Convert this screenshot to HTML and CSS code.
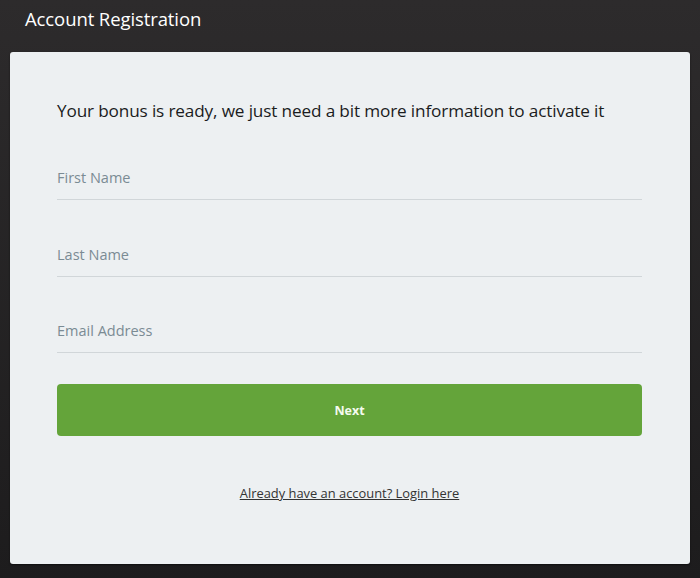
FILE: index.html
```html
<!DOCTYPE html>
<html lang="en">
<head>
<meta charset="utf-8">
<title>Account Registration</title>
<link rel="stylesheet" href="styles.css">
</head>
<body>
<div class="page">
  <header class="topbar">
    <h1 class="title">Account Registration</h1>
  </header>
  <main class="card">
    <p class="intro">Your bonus is ready, we just need a bit more information to activate it</p>
    <form class="form">
      <label class="field"><input class="input" type="text" placeholder="First Name"></label>
      <label class="field"><input class="input" type="text" placeholder="Last Name"></label>
      <label class="field"><input class="input" type="email" placeholder="Email Address"></label>
      <button class="next" type="button">Next</button>
    </form>
    <div class="login"><a href="#" class="login-link">Already have an account? Login here</a></div>
  </main>
</div>
</body>
</html>
```
FILE: styles.css
```css
* { box-sizing: border-box; }
html, body { margin: 0; padding: 0; }
body {
  width: 700px;
  height: 578px;
  overflow: hidden;
  font-family: "Open Sans", "Noto Sans", sans-serif;
  background: linear-gradient(#2d2b2c, #1d1c1d);
}
.page {
  padding: 0 10px;
  height: 578px;
  display: flex;
  flex-direction: column;
}
.topbar {
  height: 52px;
  padding: 6px 0 0 15px;
}
.title {
  margin: 0;
  font-size: 18.5px;
  font-weight: 400;
  color: #ffffff;
  line-height: 26px;
  letter-spacing: -0.1px;
}
.card {
  height: 512px;
  background: #edf0f2;
  border-radius: 3px;
  padding: 44px 48px 0 47px;
  box-shadow: 0 1px 2px rgba(0,0,0,0.5);
}
.intro {
  margin: 0;
  font-size: 17.2px;
  color: #1b1c1d;
  line-height: 30px;
  letter-spacing: -0.15px;
  white-space: nowrap;
}
.form {
  display: flex;
  flex-direction: column;
  margin-top: 38px;
}
.field {
  display: block;
  border-bottom: 1px solid #d1d6d9;
  height: 36px;
  padding-bottom: 9px;
  margin-bottom: 41px;
}
.field:nth-child(2) { margin-bottom: 40px; }
.field:nth-child(3) { margin-bottom: 31px; }
.input {
  display: block;
  width: 100%;
  height: 26px;
  border: none;
  background: transparent;
  padding: 0;
  font-family: inherit;
  font-size: 14.5px;
  color: #333;
  outline: none;
}
.input::placeholder { color: #7b8b94; opacity: 1; }
.next {
  height: 52px;
  border: none;
  border-radius: 4px;
  background: #64a43a;
  color: #f4fbef;
  font-family: inherit;
  font-size: 12.5px;
  font-weight: 700;
  cursor: pointer;
}
.login {
  text-align: center;
  margin-top: 47px;
  line-height: 18px;
}
.login-link {
  font-size: 12.9px;
  color: #333333;
  text-decoration: underline;
}
```
